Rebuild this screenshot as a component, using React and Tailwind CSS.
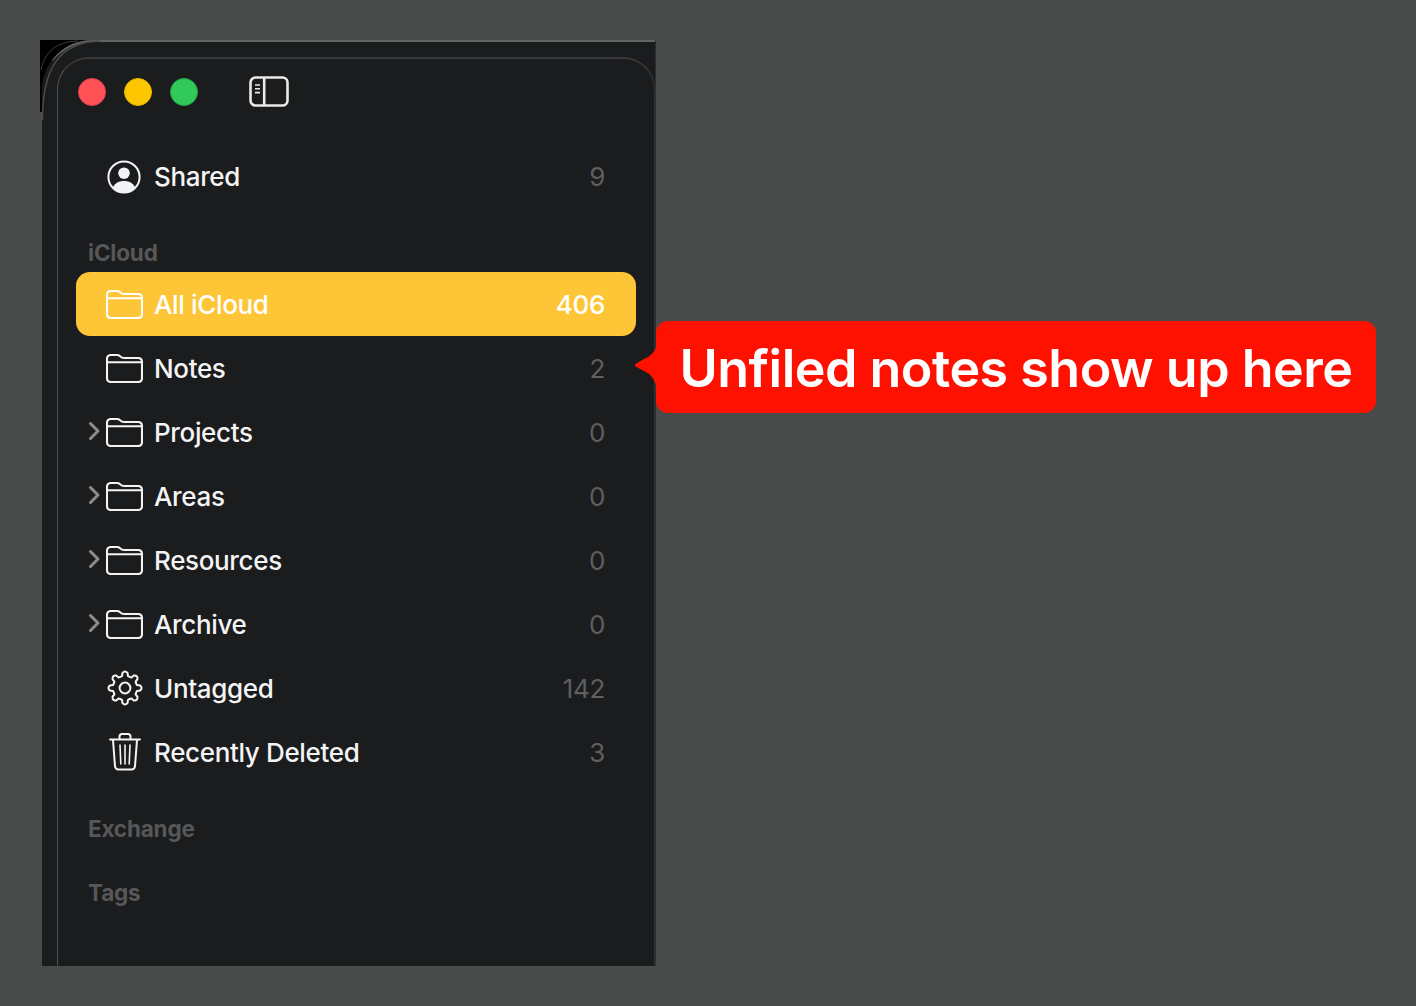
import React from 'react'

const gearPath = () => {
  // 8 rounded teeth around the hub
  const teeth = 8
  const cx = 18
  const cy = 18
  const pts = []
  for (let i = 0; i < teeth; i++) {
    const a = (i / teeth) * Math.PI * 2 - Math.PI / 2
    const step = (Math.PI * 2) / teeth
    const p = (r, d) => `${(cx + r * Math.cos(a + d)).toFixed(2)} ${(cy + r * Math.sin(a + d)).toFixed(2)}`
    pts.push(
      `${i === 0 ? 'M' : 'L'}${p(12.4, -step * 0.3)}`,
      `L${p(15.2, -step * 0.22)}`,
      `Q${p(18.2, 0)} ${p(15.2, step * 0.22)}`,
      `L${p(12.4, step * 0.3)}`,
      `Q${p(11.8, step * 0.5)} ${p(12.4, step * 0.7)}`,
    )
  }
  return pts.join(' ') + ' Z'
}

const FolderIcon = () => (
  <svg width="37" height="29" viewBox="0 0 37 29" fill="none" stroke="currentColor" strokeWidth="2.1" strokeLinejoin="round" className="shrink-0">
    <path d="M1 5Q1 1 5 1H10.5Q13 1 14.5 2.6Q15.8 4 18 4H32Q36 4 36 8V24Q36 28 32 28H5Q1 28 1 24Z" />
    <path d="M2 8.2H36" />
  </svg>
)

const GearIcon = () => (
  <svg width="36" height="36" viewBox="0 0 36 36" fill="none" stroke="currentColor" strokeWidth="2" strokeLinejoin="round" className="shrink-0">
    <path d={gearPath()} />
    <circle cx="18" cy="18" r="5.4" />
  </svg>
)

const TrashIcon = () => (
  <svg width="36" height="38" viewBox="0 0 36 38" fill="none" stroke="currentColor" strokeWidth="2" strokeLinecap="round" strokeLinejoin="round" className="shrink-0">
    <path d="M3 6.5H33" />
    <path d="M12.5 6V3.5Q12.5 1 15 1H21Q23.5 1 23.5 3.5V6" />
    <path d="M6 7L8 33Q8.3 36.5 11.5 36.5H24.5Q27.7 36.5 28 33L30 7" />
    <path d="M13 12L13.8 31M18 12V31M23 12L22.2 31" strokeWidth="1.6" />
  </svg>
)

const PersonIcon = () => (
  <svg width="34" height="34" viewBox="0 0 34 34" className="-ml-px shrink-0 text-[#f2f3f5]">
    <circle cx="17" cy="17" r="15.6" fill="none" stroke="currentColor" strokeWidth="2" />
    <circle cx="17" cy="13.2" r="5.8" fill="currentColor" />
    <path d="M5.8 27.5C8 23 12 21 17 21C22 21 26 23 28.2 27.5C25.4 30.6 21.4 32.6 17 32.6C12.6 32.6 8.6 30.6 5.8 27.5Z" fill="currentColor" />
  </svg>
)

const SidebarIcon = () => (
  <svg width="40" height="31" viewBox="0 0 40 31" fill="none" stroke="#e9e9ea" strokeWidth="2.6" className="ml-[33px] shrink-0">
    <rect x="1.5" y="1.5" width="37" height="28" rx="5" />
    <path d="M15.2 1.5V29.5" />
    <path d="M6 9H11M6 12.8H11M6 16.6H11" strokeWidth="1.6" />
  </svg>
)

const Chevron = () => (
  <svg width="12" height="20" viewBox="0 0 12 20" fill="none" stroke="#8b8c8d" strokeWidth="3" strokeLinecap="round" strokeLinejoin="round" className="shrink-0">
    <path d="M2.5 2.5L10 10L2.5 17.5" />
  </svg>
)

const rows = [
  { name: 'All iCloud', count: 406, icon: 'folder', active: true },
  { name: 'Notes', count: 2, icon: 'folder' },
  { name: 'Projects', count: 0, icon: 'folder', chevron: true },
  { name: 'Areas', count: 0, icon: 'folder', chevron: true },
  { name: 'Resources', count: 0, icon: 'folder', chevron: true },
  { name: 'Archive', count: 0, icon: 'folder', chevron: true },
  { name: 'Untagged', count: 142, icon: 'gear' },
  { name: 'Recently Deleted', count: 3, icon: 'trash' },
]

const Row = ({ name, count, icon, chevron, active }) => (
  <div className={`flex h-16 items-center rounded-[14px] pr-[31px] pl-[12px] text-[26px] leading-none tracking-[-0.35px] ${active ? 'bg-[#fec637] text-white' : 'text-[#f4f4f5]'}`}>
    <div className="flex w-[18px] shrink-0 items-center -translate-y-px">{chevron && <Chevron />}</div>
    <div className="flex w-[37px] shrink-0 items-center justify-center">
      {icon === 'folder' && <FolderIcon />}
      {icon === 'gear' && <GearIcon />}
      {icon === 'trash' && <TrashIcon />}
    </div>
    <span className="ml-[11px] flex-1 pt-px">{name}</span>
    <span className={active ? 'pt-px font-medium text-white' : 'pt-px font-normal text-[#5e5f60]'}>{count}</span>
  </div>
)

export default function App() {
  return (
    <div className="flex min-h-[1006px] items-start bg-[#494b4a] pt-10 pl-10 font-['Inter',sans-serif] font-medium">
      {/* the cropped window, with its stacked rounded corner */}
      <div className="relative h-[926px] w-[616px] shrink-0 bg-linear-to-b from-black from-[72px] to-[#494b4a] to-[72px] pl-[2px]">
        <div className="h-full rounded-tl-[50px] border-t-2 border-r border-l border-t-[#626463] border-r-[#2d2e2e] border-l-[#1b1c1d] bg-[#1b1c1d] pt-[15px] pl-[14px]">
          <div className="h-[909px] rounded-t-[32px] border-t-2 border-r border-l border-t-[#38393a] border-r-[#333435] border-l-[#4f5051] px-[18px]">
            <div className="flex h-[86px] items-start pt-[17px] pl-[2px]">
              <div className="flex items-center gap-[18px]">
                <div className="size-7 rounded-full border border-[#e8434a] bg-[#fe5257]" />
                <div className="size-7 rounded-full border border-[#e8b400] bg-[#fdc700]" />
                <div className="size-7 rounded-full border border-[#22ad47] bg-[#30c95a]" />
                <SidebarIcon />
              </div>
            </div>

            <div className="flex h-16 items-center pr-[31px] pl-[12px] text-[26px] leading-none tracking-[-0.35px] text-[#f4f4f5]">
              <div className="w-[18px] shrink-0" />
              <div className="flex w-[37px] shrink-0 justify-center"><PersonIcon /></div>
              <span className="ml-[11px] flex-1">Shared</span>
              <span className="font-normal text-[#5e5f60]">9</span>
            </div>

            <div className="flex h-[63px] items-end pb-[5px] pl-[12px] text-[22.5px] leading-7 font-bold tracking-[-0.2px] text-[#565758]">iCloud</div>

            {rows.map((row) => (
              <Row key={row.name} {...row} />
            ))}

            <div className="mt-3 flex h-16 items-center pt-[2px] pl-[12px] text-[22.5px] font-bold tracking-[-0.2px] text-[#565758]">Exchange</div>
            <div className="flex h-16 items-center pt-[2px] pl-[12px] text-[22.5px] font-bold tracking-[-0.2px] text-[#565758]">Tags</div>
          </div>
        </div>
        <svg width="70" height="90" viewBox="0 0 70 90" fill="none" className="absolute top-0 left-0">
          <path d="M2.5 80C2.5 30 18 2 60 1" stroke="#4c4d4e" strokeWidth="1.4" />
          <path d="M1 30C5 12 15 2 38 1" stroke="#3a3b3c" strokeWidth="1" />
        </svg>
      </div>

      {/* callout pointing at the Notes row */}
      <div className="relative mt-[281px] flex h-[92px] w-[720px] shrink-0 items-center justify-center rounded-xl bg-[#fe1100] pt-1 text-[52px] leading-none font-semibold tracking-[-0.5px] text-white">
        <svg width="24" height="44" viewBox="0 0 24 44" className="absolute top-[24px] -left-[22px]">
          <path d="M23 0V44Q20 30 10 26L1.5 21.5Q0 20 1.5 19L10 14Q20 10 23 0Z" fill="#fe1100" />
        </svg>
        <span>Unfiled notes show up here</span>
      </div>
    </div>
  )
}
